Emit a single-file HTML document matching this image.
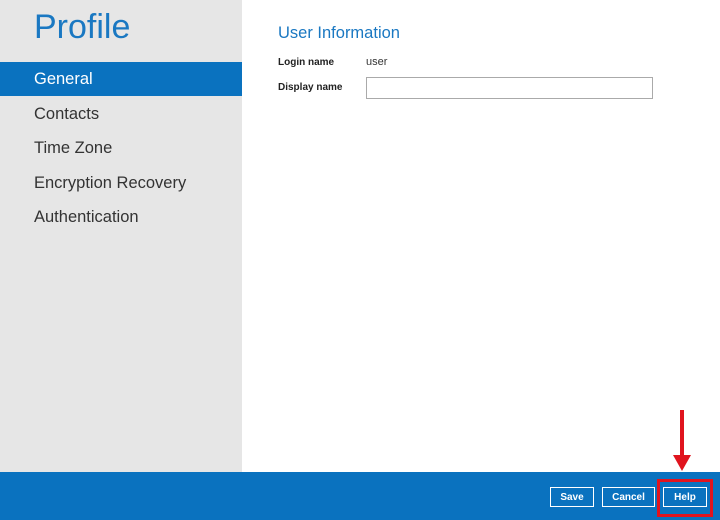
<!DOCTYPE html>
<html><head><style>
*{margin:0;padding:0;box-sizing:border-box}
body{width:720px;height:520px;position:relative;background:#fff;font-family:"Liberation Sans",sans-serif;overflow:hidden}
.side{position:absolute;left:0;top:0;width:242px;height:472px;background:#e6e6e6}
.t{position:absolute;left:34px;top:8px;font-size:34px;color:#1a78c2}
.nav{position:absolute;left:0;width:242px;height:34px;line-height:34px;padding-left:34px;font-size:16.5px;color:#333}
.sel{background:#0a72bf;color:#fff}
.h{position:absolute;left:278px;top:24px;font-size:16.5px;color:#1a78c2}
.l{position:absolute;font-size:10px;font-weight:bold;color:#222}
.bar{position:absolute;left:0;top:472px;width:720px;height:48px;background:#0a72bf}
.b{position:absolute;top:487px;height:20px;border:1.5px solid #fff;color:#fff;font-size:10px;font-weight:bold;text-align:center;line-height:19px}
</style></head><body>
<div class="side"></div>
<div class="t">Profile</div>
<div class="nav sel" style="top:62px">General</div>
<div class="nav" style="top:97px">Contacts</div>
<div class="nav" style="top:131px">Time Zone</div>
<div class="nav" style="top:166px">Encryption Recovery</div>
<div class="nav" style="top:200px">Authentication</div>
<div class="h">User Information</div>
<div class="l" style="left:278px;top:57px">Login name</div>
<div style="position:absolute;left:366px;top:56px;font-size:11px;color:#333">user</div>
<div class="l" style="left:278px;top:82px">Display name</div>
<div style="position:absolute;left:366px;top:77px;width:287px;height:22px;border:1px solid #aaa;background:#fff"></div>
<div class="bar"></div>
<div class="b" style="left:550px;width:44px">Save</div>
<div class="b" style="left:602px;width:53px">Cancel</div>
<div class="b" style="left:663px;width:44px">Help</div>
<div style="position:absolute;left:657px;top:479px;width:56px;height:38px;border:3px solid #e0141e"></div>
<div style="position:absolute;left:680px;top:410px;width:4px;height:48px;background:#e0141e"></div>
<div style="position:absolute;left:673px;top:455px;width:0;height:0;border-left:9px solid transparent;border-right:9px solid transparent;border-top:16px solid #e0141e"></div>
</body></html>
